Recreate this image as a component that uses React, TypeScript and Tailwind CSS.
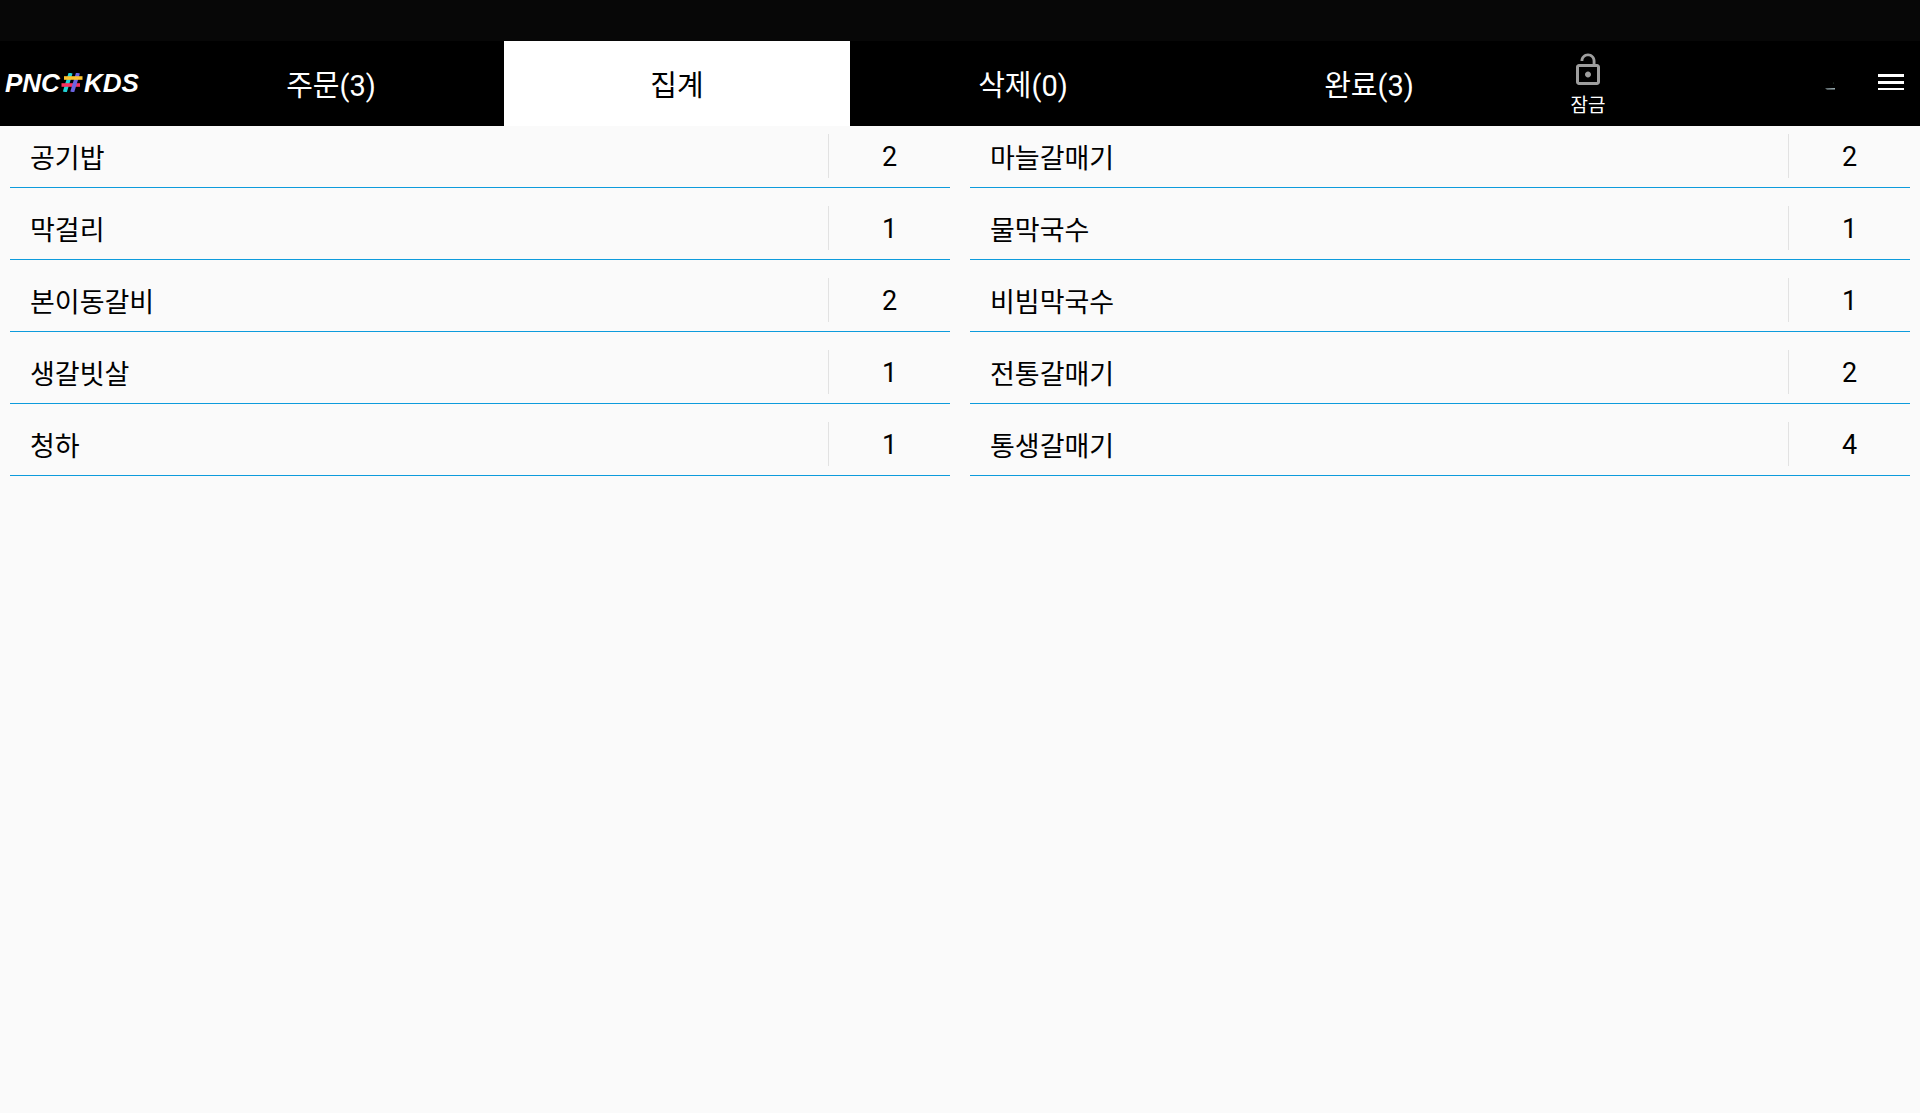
import { useState } from 'react'
import clsx from 'clsx'
import { MdLockOpen } from 'react-icons/md'

interface SummaryItem {
  name: string
  count: number
}

const tabs = [
  { id: 'order', label: '주문(3)' },
  { id: 'summary', label: '집계' },
  { id: 'deleted', label: '삭제(0)' },
  { id: 'done', label: '완료(3)' },
]

const items: SummaryItem[] = [
  { name: '공기밥', count: 2 },
  { name: '마늘갈매기', count: 2 },
  { name: '막걸리', count: 1 },
  { name: '물막국수', count: 1 },
  { name: '본이동갈비', count: 2 },
  { name: '비빔막국수', count: 1 },
  { name: '생갈빗살', count: 1 },
  { name: '전통갈매기', count: 2 },
  { name: '청하', count: 1 },
  { name: '통생갈매기', count: 4 },
]

function Logo() {
  return (
    <div className="flex w-[158px] shrink-0 items-center gap-px pb-[2px] pl-[5px] font-['Liberation_Sans',sans-serif] text-[26px] leading-8 font-bold text-white italic">
      <span>PNC</span>
      <svg width="22" height="19" viewBox="0 0 22 19" fill="none" aria-hidden="true">
        <path d="M9.6 0 3.8 19" stroke="#22d3d6" strokeWidth="4" />
        <path d="M0.5 12H19" stroke="#fb2f5e" strokeWidth="3.6" />
        <path d="M17 0 11.2 19" stroke="#6b63e0" strokeWidth="4" />
        <path d="M3 5H21.5" stroke="#fdc32f" strokeWidth="3.6" />
      </svg>
      <span>KDS</span>
    </div>
  )
}

function SummaryRow({ item }: { item: SummaryItem }) {
  return (
    <li className="flex border-b border-[#0d9bdc] pt-2 pb-[9px] text-[27px] text-black">
      <span className="min-w-0 flex-1 truncate pt-[6px] pl-5 leading-[38px]">{item.name}</span>
      <span className="w-[122px] border-l border-[#e2e2e2] pt-[2px] text-center leading-[42px]">
        {item.count}
      </span>
    </li>
  )
}

export default function App() {
  const [activeTab, setActiveTab] = useState('summary')

  return (
    <div className="min-h-screen bg-[#fafafa] font-[Roboto,'Noto_Sans_CJK_KR',sans-serif]">
      {/* Status bar */}
      <div className="h-[41px] bg-[#070707]" />

      {/* Top bar */}
      <header className="flex h-[85px] bg-black text-white">
        <Logo />

        <nav className="flex flex-1">
          {tabs.map((tab) => (
            <button
              key={tab.id}
              onClick={() => setActiveTab(tab.id)}
              className={clsx(
                'flex-1 pt-1 text-[29px] leading-10',
                activeTab === tab.id ? 'bg-white text-black' : 'bg-black text-white'
              )}
            >
              {tab.label}
            </button>
          ))}
        </nav>

        <button className="flex w-[92px] shrink-0 flex-col items-center gap-1 pt-[11px] text-[19px] leading-7">
          <MdLockOpen size={36} className="text-[#9e9e9e]" />
          잠금
        </button>

        <div className="flex w-[286px] shrink-0 items-center justify-end gap-[42px] pr-4 pb-1">
          {/* Connection indicator */}
          <svg width="12" height="16" viewBox="0 0 12 16" aria-hidden="true">
            <path d="M1 14.5 11 14v1.5H3z" fill="#9fb3b8" />
            <circle cx="9.5" cy="9" r="0.6" fill="#2f4a3c" />
          </svg>
          <button aria-label="메뉴">
            <svg width="26" height="16" viewBox="0 0 26 16" fill="currentColor">
              <rect width="26" height="3" />
              <rect y="7" width="26" height="3" />
              <rect y="14" width="26" height="2" />
            </svg>
          </button>
        </div>
      </header>

      {/* Summary list */}
      <ul className="grid grid-cols-2 gap-x-5 gap-y-[10px] px-[10px]">
        {items.map((item) => (
          <SummaryRow key={item.name} item={item} />
        ))}
      </ul>
    </div>
  )
}
